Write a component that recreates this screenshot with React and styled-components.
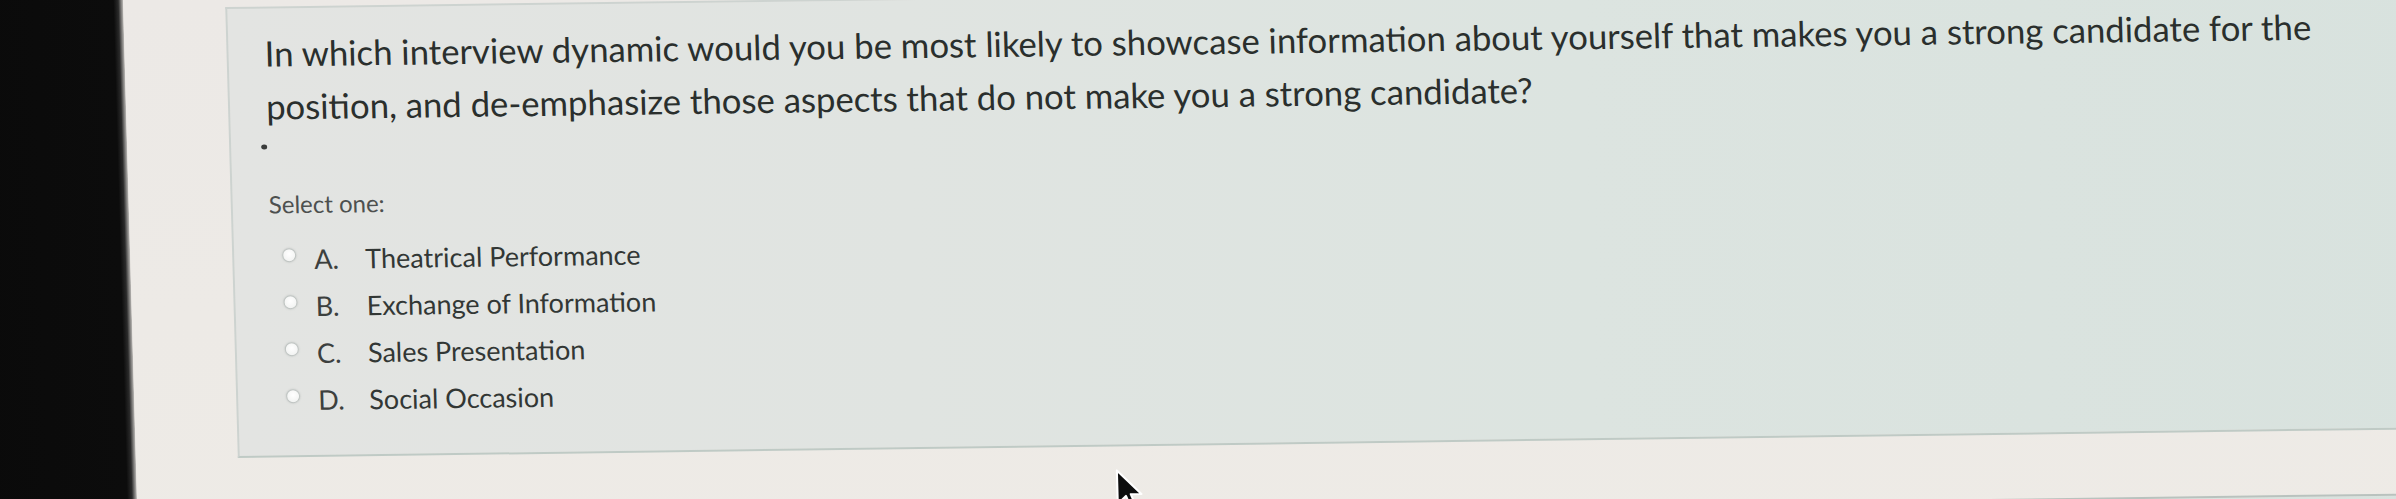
import React from "react";
import styled, { createGlobalStyle } from "styled-components";

const GlobalStyle = createGlobalStyle`
  html, body {
    margin: 0;
    padding: 0;
    overflow: hidden;
    background: #ebe8e4;
  }
  body {
    width: 2396px;
    height: 499px;
  }
`;

const Screen = styled.div`
  position: relative;
  display: flex;
  width: 2520px;
  height: 640px;
  margin-left: -40px;
  background: #ebe8e4;
  transform-origin: 40px 0;
  transform: rotate(-0.75deg) skewX(0.85deg);
  font-family: Lato, "Open Sans", "Liberation Sans", sans-serif;
`;

const Bezel = styled.div`
  flex: 0 0 163px;
  background: linear-gradient(
    90deg,
    #0a0a0a 0%,
    #0c0c0c 94%,
    #2a2a2a 97%,
    #bdbbb8 100%
  );
`;

const Page = styled.main`
  flex: 1;
  display: flex;
  flex-direction: column;
  padding: 10px 0 0 102px;
  background: linear-gradient(180deg, #ece9e6 0%, #eeebe6 100%);
`;

const Card = styled.section`
  flex: 0 0 auto;
  display: flex;
  flex-direction: column;
  box-sizing: border-box;
  height: ${(p) => p.$height}px;
  margin-top: ${(p) => p.$gap || 0}px;
  padding: 18px 0 0 36px;
  border: 2px solid ${(p) => (p.$next ? "#b9c2be" : "#cdd3d0")};
  border-right: none;
  border-bottom-color: #bfcac5;
  background: linear-gradient(
    90deg,
    #e3e4e2 0%,
    #e0e4e1 30%,
    #dce4e0 60%,
    #d8e2de 100%
  );
`;

const QuestionText = styled.p`
  margin: 0;
  width: 2090px;
  font-size: 34.7px;
  line-height: 53px;
  font-weight: 400;
  color: #2a2f2d;
`;

const Marker = styled.span`
  display: block;
  width: 6px;
  height: 5px;
  margin: 12px 0 0 -6px;
  border-radius: 50%;
  background: #3a3c3b;
`;

const Prompt = styled.div`
  margin-top: 38px;
  font-size: 24px;
  line-height: 34px;
  color: #4d504f;
`;

const Options = styled.div`
  display: flex;
  flex-direction: column;
  margin-top: 14px;
`;

const OptionRow = styled.label`
  display: flex;
  align-items: center;
  height: 47px;
  padding-left: 12px;
  font-size: 27px;
  color: #323735;
`;

const Radio = styled.span`
  flex: 0 0 auto;
  box-sizing: border-box;
  width: 14px;
  height: 14px;
  margin: -8px 18px 0 0;
  border-radius: 50%;
  border: 1.5px solid #bfc4c2;
  background: radial-gradient(circle at 50% 40%, #ffffff 0%, #f3f4f3 70%, #e2e5e3 100%);
  box-shadow: 0 0 2px rgba(120, 128, 125, 0.35);
`;

const Letter = styled.span`
  flex: 0 0 51px;
  color: #3c403e;
`;

const Answer = styled.span`
  white-space: nowrap;
`;

const Cursor = styled.svg`
  position: absolute;
  left: 1143px;
  top: 485px;
  width: 26px;
  height: 42px;
  overflow: visible;
`;

const options = [
  ["A.", "Theatrical Performance"],
  ["B.", "Exchange of Information"],
  ["C.", "Sales Presentation"],
  ["D.", "Social Occasion"],
];

export default function App() {
  return (
    <>
      <GlobalStyle />
      <Screen>
        <Bezel />
        <Page>
          <Card $height={451}>
            <QuestionText>
              In which interview dynamic would you be most likely to showcase
              information about yourself that makes you a strong candidate for
              the position, and de-emphasize those aspects that do not make you
              a strong candidate?
            </QuestionText>
            <Marker />
            <Prompt>Select one:</Prompt>
            <Options>
              {options.map(([letter, text]) => (
                <OptionRow key={letter}>
                  <Radio />
                  <Letter>{letter}</Letter>
                  <Answer>{text}</Answer>
                </OptionRow>
              ))}
            </Options>
          </Card>
          <Card $height={120} $gap={64} $next />
        </Page>
        <Cursor viewBox="0 0 12 20">
          <path
            d="M0 0 L0 16 L4 12.2 L6.8 19 L9 18 L6.3 11.4 L11.4 11.4 Z"
            fill="#0d0d0d"
            stroke="#ffffff"
            strokeWidth="1"
            strokeLinejoin="round"
          />
        </Cursor>
      </Screen>
    </>
  );
}
